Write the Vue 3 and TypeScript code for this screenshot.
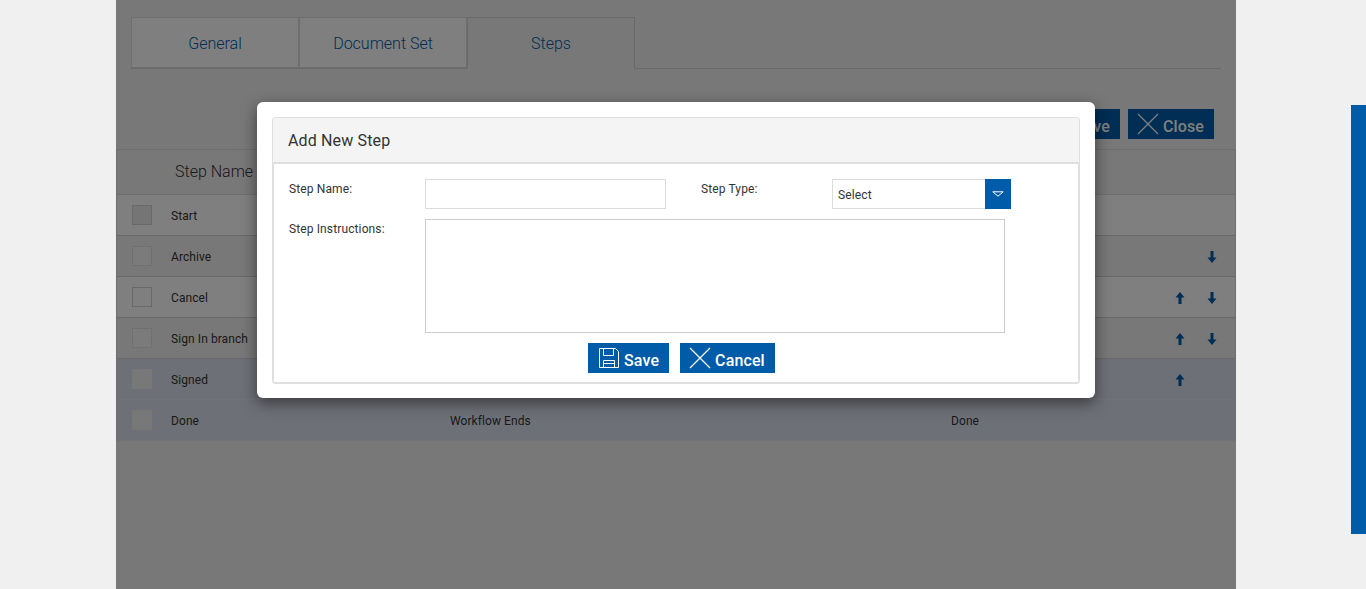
<script setup lang="ts">
interface Row { name: string; type: string; next: string; up: boolean; down: boolean; cls: string }
const rows: Row[] = [
  { name: 'Start', type: '', next: '', up: false, down: false, cls: 'plain first' },
  { name: 'Archive', type: '', next: '', up: false, down: true, cls: 'alt' },
  { name: 'Cancel', type: '', next: '', up: true, down: true, cls: 'plain' },
  { name: 'Sign In branch', type: '', next: '', up: true, down: true, cls: 'alt' },
  { name: 'Signed', type: '', next: '', up: true, down: false, cls: 'sel' },
  { name: 'Done', type: 'Workflow Ends', next: 'Done', up: false, down: false, cls: 'sel' },
]
</script>

<template>
  <div class="page">
    <main class="main">
      <nav class="tabs">
        <div class="tab">General</div>
        <div class="tab">Document Set</div>
        <div class="tab active">Steps</div>
      </nav>
      <div class="actions">
        <button class="btn" type="button">
          <svg viewBox="0 0 22 22" width="22" height="22" fill="none" stroke="currentColor"><path d="M1.500 1.500h16l3 3v16h-19z M5.500 1.500v7h10v-7 M5.500 20.500v-7h11v7 M5.500 16.500h11"/></svg>
          <span>Save</span>
        </button>
        <button class="btn" type="button">
          <svg class="x" viewBox="0 0 22 22" width="22" height="22" fill="none" stroke="currentColor" stroke-width="1.200"><path d="M1 1l20 20M21 1L1 21"/></svg>
          <span>Close</span>
        </button>
      </div>
      <section class="table">
        <header class="thead">Step Name</header>
        <div v-for="r in rows" :key="r.name" class="row" :class="r.cls">
          <span class="check"></span>
          <span class="c-name">{{ r.name }}</span>
          <span class="c-type">{{ r.type }}</span>
          <span class="c-next">{{ r.next }}</span>
          <span class="arrow">
            <svg v-if="r.up" viewBox="0 0 10 12" width="10" height="12"><path d="M5 0l4.500 5.500H6.500V12h-3V5.500H.5z"/></svg>
          </span>
          <span class="arrow">
            <svg v-if="r.down" viewBox="0 0 10 12" width="10" height="12"><path d="M5 12L.5 6.500h3V0h3v6.500h3z"/></svg>
          </span>
        </div>
      </section>
      <div class="overlay"></div>
    </main>
    <aside class="gutter"><div class="side"></div></aside>

    <div class="modal">
      <div class="panel">
        <h2 class="title">Add New Step</h2>
        <form class="body" @submit.prevent>
          <div class="grid">
            <label class="lab">Step Name:</label>
            <input class="input" type="text" />
            <label class="lab lab-type">Step Type:</label>
            <div class="select">
              <span class="sel-text">Select</span>
              <span class="sel-btn">
                <svg viewBox="0 0 12 6" width="12" height="6" fill="none" stroke="#fff" stroke-width="1"><path d="M.8.800h10.400L6 5.200z"/></svg>
              </span>
            </div>
            <label class="lab">Step Instructions:</label>
            <textarea class="area"></textarea>
          </div>
          <div class="foot">
            <button class="btn" type="button">
              <svg viewBox="0 0 22 22" width="22" height="22" fill="none" stroke="currentColor"><path d="M1.500 1.500h16l3 3v16h-19z M5.500 1.500v7h10v-7 M5.500 20.500v-7h11v7 M5.500 16.500h11"/></svg>
              <span>Save</span>
            </button>
            <button class="btn" type="button">
              <svg class="x" viewBox="0 0 22 22" width="22" height="22" fill="none" stroke="currentColor" stroke-width="1.200"><path d="M1 1l20 20M21 1L1 21"/></svg>
              <span>Cancel</span>
            </button>
          </div>
        </form>
      </div>
    </div>
  </div>
</template>

<style>
html, body { margin: 0; background: #f0f0f0; overflow: hidden; }
</style>

<style scoped>
.page {
  position: relative;
  height: 589px;
  overflow: hidden;
  display: flex;
  padding-left: 116px;
  box-sizing: border-box;
  background: #f0f0f0;
  font-family: Roboto, "Liberation Sans", sans-serif;
  color: #333;
}
.main {
  position: relative;
  width: 1120px;
  height: 589px;
  flex: none;
  background: #f0f0f0;
  padding-top: 17px;
  box-sizing: border-box;
}
.overlay {
  position: absolute;
  inset: 0;
  background: rgba(0, 0, 0, 0.5);
}
.tabs {
  display: flex;
  margin: 0 15px;
  height: 52px;
  border-bottom: 1px solid #d2d2d2;
  box-sizing: border-box;
}
.tab {
  width: 168px;
  height: 51px;
  box-sizing: border-box;
  border: 1px solid #dcdcdc;
  background: #fff;
  color: #005ca8;
  font-size: 16px;
  font-weight: 300;
  line-height: 51px;
  text-align: center;
}
.tab.active {
  height: 52px;
  background: #f0f0f0;
  border-color: #d2d2d2;
  border-bottom-color: #f0f0f0;
}
.actions {
  display: flex;
  justify-content: flex-end;
  gap: 8px;
  margin-top: 40px;
  padding-right: 22px;
  height: 30px;
}
.btn {
  display: inline-flex;
  align-items: flex-start;
  gap: 4px;
  height: 30px;
  padding: 4px 10px 0;
  box-sizing: border-box;
  border: 0;
  background: #005ca8;
  color: #fff;
  font-family: Roboto, "Liberation Sans", sans-serif;
  font-size: 16px;
  font-weight: 500;
  letter-spacing: 0.12px;
}
.btn svg { flex: none; }
.btn svg.x { margin-left: -1px; }
.btn span { line-height: 18px; padding-top: 5px; }
.table {
  margin-top: 10px;
  border: 1px solid #dcdcdc;
  border-bottom: 0;
  box-sizing: border-box;
}
.thead {
  height: 45px;
  box-sizing: border-box;
  padding-left: 58px;
  line-height: 44px;
  font-size: 16px;
  font-weight: 300;
  color: #333;
  border-bottom: 1px solid #dcdcdc;
}
.row {
  height: 41px;
  display: flex;
  align-items: center;
  padding: 1px 0 0 15px;
  box-sizing: border-box;
  border-bottom: 1px solid #d2d2d2;
  font-size: 12px;
  letter-spacing: 0.08px;
  color: #333;
}
.row.plain { background: #fff; }
.row.alt { background: #f0f0f0; }
.row.sel { background: #dde0ee; border-bottom-color: #e4e7f2; }
.check {
  width: 20px;
  height: 20px;
  margin-top: -1px;
  box-sizing: border-box;
  border: 1px solid #d2d2d2;
  background: #fff;
  flex: none;
}
.row.first .check { background: #eaeaea; }
.row.alt .check { border-color: #e0e0e0; background: #f6f6f6; }
.row.sel .check { border-color: #eee; background: #f0f0f0; }
.c-name { width: 279px; margin-left: 19px; flex: none; }
.c-type { width: 501px; flex: none; }
.c-next { width: 224px; flex: none; }
.arrow {
  width: 10px;
  height: 12px;
  flex: none;
  margin-right: 22px;
  display: block;
  fill: #005ca8;
}
.arrow svg { display: block; }
.gutter {
  flex: 1;
  display: flex;
  justify-content: flex-end;
  padding-top: 105px;
}
.side {
  width: 15px;
  height: 429px;
  background: #005ca8;
}
.modal {
  position: absolute;
  left: 257px;
  top: 102px;
  width: 838px;
  height: 296px;
  box-sizing: border-box;
  padding: 15px;
  background: #fff;
  border-radius: 6px;
  box-shadow: 0 5px 15px rgba(0, 0, 0, 0.5);
}
.panel {
  width: 808px;
  height: 267px;
  box-sizing: border-box;
  border: 1px solid #dfdfdf;
  border-bottom-width: 2px;
  border-radius: 4px;
  overflow: hidden;
}
.title {
  margin: 0;
  height: 46px;
  box-sizing: border-box;
  padding-left: 15px;
  background: #f4f4f4;
  border-bottom: 2px solid #e0e0e0;
  font-size: 16px;
  font-weight: 400;
  letter-spacing: 0.15px;
  line-height: 45px;
  color: #333;
}
.body {
  margin: 0;
  border-left: 1px solid #dfdfdf;
  border-right: 1px solid #dfdfdf;
  height: 219px;
  box-sizing: border-box;
  padding: 15px 0 0 15px;
}
.grid {
  display: grid;
  grid-template-columns: 136px 241px 166px 179px;
  grid-template-rows: 30px 114px;
  row-gap: 10px;
  font-size: 12px;
  letter-spacing: 0.12px;
  color: #333;
}
.lab { padding-top: 3px; line-height: 14px; }
.lab-type { padding-left: 35px; }
.input {
  width: 241px;
  height: 30px;
  box-sizing: border-box;
  border: 1px solid #dcdcdc;
  padding: 0 6px;
  background: #fff;
}
.select {
  width: 179px;
  height: 30px;
  display: flex;
  box-sizing: border-box;
  border: 1px solid #dcdcdc;
  border-right: 0;
  background: #fff;
}
.sel-text { flex: 1; padding-left: 5px; line-height: 30px; color: #333; }
.sel-btn {
  width: 26px;
  margin-top: -1px;
  height: 30px;
  background: #005ca8;
  display: flex;
  align-items: center;
  justify-content: center;
}
.area {
  grid-column: 2 / 5;
  width: 580px;
  height: 114px;
  box-sizing: border-box;
  border: 1px solid #ccc;
  resize: none;
  background: #fff;
  padding: 4px;
}
.foot {
  display: flex;
  gap: 11px;
  margin-top: 10px;
  padding-left: 299px;
}
</style>
